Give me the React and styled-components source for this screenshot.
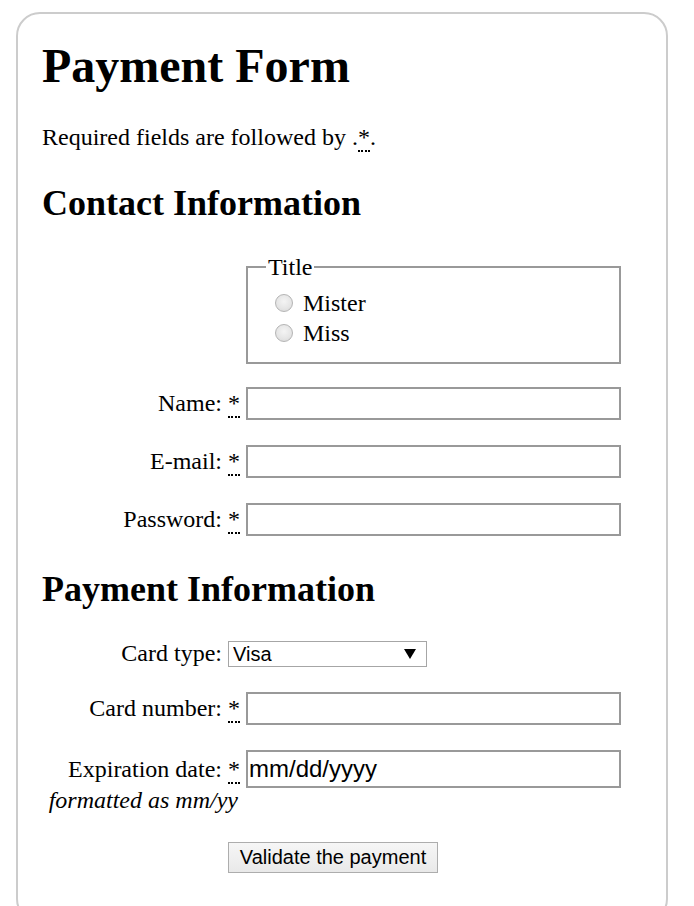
import React from 'react'
import styled, { createGlobalStyle } from 'styled-components'

const GlobalStyle = createGlobalStyle`
  body {
    margin: 12px 0 0 16px;
    background: #fff;
    color: #000;
    font-family: "Liberation Serif", "Times New Roman", serif;
    font-size: 24px;
  }
`

const Form = styled.form`
  width: 600px;
  padding: 24px;
  border: 2px solid #ccc;
  border-radius: 24px;
`

const Title = styled.h1`
  font-size: 48px;
  margin: 0 0 30px;
  line-height: 55px;
`

const Note = styled.p`
  margin: 0;
  line-height: 28px;
`

const Required = styled.abbr`
  text-decoration: none;
  border-bottom: 2px dotted #000;
  font-weight: normal;
  line-height: 1;
`

const SectionTitle = styled.h2`
  font-size: 36px;
  line-height: 41px;
  margin: ${p => p.$top || 30}px 0 30px;
`

const Fieldset = styled.fieldset`
  width: 375px;
  box-sizing: border-box;
  margin: 0 0 0 204px;
  padding: 8px 18px 14px;
  border: 2px solid #999;
`

const Legend = styled.legend`
  padding: 0 2px;
  line-height: 26px;
`

const RadioList = styled.ul`
  margin: 0;
  padding: 0;
  list-style: none;
`

const RadioItem = styled.li`
  line-height: 30px;
  display: flex;
  align-items: center;
`

const Radio = styled.input`
  appearance: none;
  width: 18px;
  height: 18px;
  margin: 0 10px 0 9px;
  border: 1px solid #b4b4b4;
  border-radius: 50%;
  background: radial-gradient(circle at 50% 40%, #f4f4f4 0%, #e6e6e6 55%, #d6d6d6 100%);
  box-sizing: border-box;
`

const Row = styled.p`
  margin: ${p => p.$top ?? 25}px 0 ${p => p.$bottom ?? 0}px;
  position: relative;
  display: flex;
  align-items: center;
`

const Label = styled.label`
  position: relative;
  display: flex;
  align-items: baseline;
`

const LabelText = styled.span`
  display: inline-block;
  width: 180px;
  text-align: right;
`

const Star = styled.strong`
  margin-left: 6px;
  font-weight: normal;
`

const Hint = styled.em`
  position: absolute;
  right: 2px;
  top: 31px;
  white-space: nowrap;
`

const TextInput = styled.input`
  margin-left: 6px;
  font: 24px "Liberation Sans", Arial, sans-serif;
  width: 375px;
  height: ${p => p.$h || 33}px;
  box-sizing: border-box;
  border: 2px solid #999;
  padding: 0 ${p => p.$pad ?? 3}px;
  outline: none;
  &::placeholder {
    color: #000;
    opacity: 1;
  }
`

const Select = styled.select`
  margin-left: 6px;
  appearance: none;
  width: 199px;
  height: 26px;
  box-sizing: border-box;
  border: 1px solid #a6a6a6;
  padding: 0 4px;
  font: 20px "Liberation Sans", Arial, sans-serif;
  color: #000;
  background: #fff url("data:image/svg+xml;utf8,<svg xmlns='http://www.w3.org/2000/svg' width='12' height='10'><polygon points='0,0 12,0 6,10' fill='black'/></svg>") no-repeat right 10px center;
`

const Button = styled.button`
  margin: 0 0 0 186px;
  width: 210px;
  height: 31px;
  font: 20px "Liberation Sans", Arial, sans-serif;
  color: #000;
  background: linear-gradient(#f6f6f6, #e9e9e9);
  border: 1px solid #adadad;
  padding: 0 10px;
`

function RequiredMark() {
  return (
    <Star><Required title="required">*</Required></Star>
  )
}

export default function App() {
  return (
    <>
      <GlobalStyle />
      <Form onSubmit={e => e.preventDefault()}>
        <Title>Payment Form</Title>
        <Note>Required fields are followed by .<Required title="required">*</Required>.</Note>

        <section>
          <SectionTitle $top={32}>Contact Information</SectionTitle>
          <Fieldset>
            <Legend>Title</Legend>
            <RadioList>
              <RadioItem>
                <Radio type="radio" id="title_1" name="title" value="M" />
                <label htmlFor="title_1">Mister</label>
              </RadioItem>
              <RadioItem>
                <Radio type="radio" id="title_2" name="title" value="Ms" />
                <label htmlFor="title_2">Miss</label>
              </RadioItem>
            </RadioList>
          </Fieldset>

          <Row $top={23}>
            <Label htmlFor="name">
              <LabelText>Name:</LabelText>
              <RequiredMark />
            </Label>
            <TextInput type="text" id="name" />
          </Row>
          <Row>
            <Label htmlFor="mail">
              <LabelText>E-mail:</LabelText>
              <RequiredMark />
            </Label>
            <TextInput type="email" id="mail" />
          </Row>
          <Row>
            <Label htmlFor="pwd">
              <LabelText>Password:</LabelText>
              <RequiredMark />
            </Label>
            <TextInput type="password" id="pwd" />
          </Row>
        </section>

        <section>
          <SectionTitle $top={33}>Payment Information</SectionTitle>
          <Row $top={0}>
            <Label htmlFor="card">
              <LabelText>Card type:</LabelText>
            </Label>
            <Select id="card" defaultValue="visa">
              <option value="visa">Visa</option>
              <option value="mc">Mastercard</option>
              <option value="amex">American Express</option>
            </Select>
          </Row>
          <Row $top={25}>
            <Label htmlFor="number">
              <LabelText>Card number:</LabelText>
              <RequiredMark />
            </Label>
            <TextInput type="tel" id="number" />
          </Row>
          <Row>
            <Label htmlFor="expiration">
              <LabelText>Expiration date:</LabelText>
              <RequiredMark />
              <Hint>formatted as mm/yy</Hint>
            </Label>
            <TextInput type="text" id="expiration" placeholder="mm/dd/yyyy" $h={38} $pad={1} />
          </Row>
        </section>

        <section>
          <Row $top={54} $bottom={24}>
            <Button type="submit">Validate the payment</Button>
          </Row>
        </section>
      </Form>
    </>
  )
}
